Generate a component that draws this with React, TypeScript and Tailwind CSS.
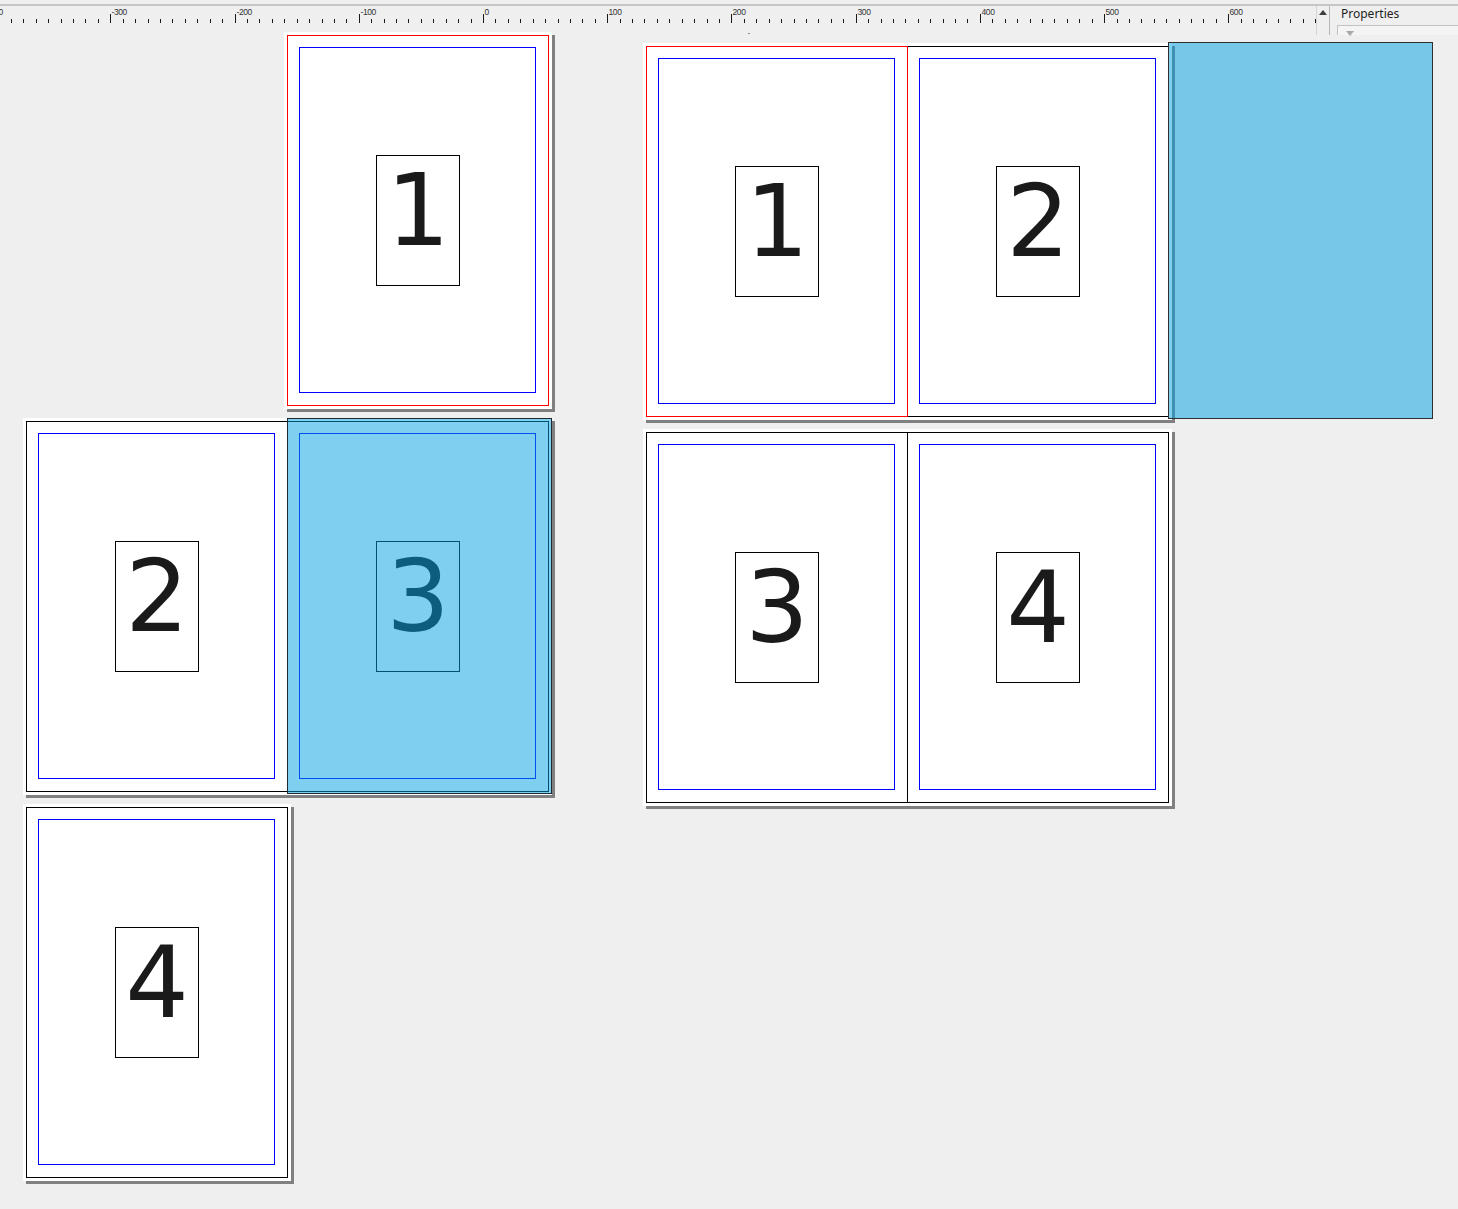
import React from 'react';

// ruler: 0 sits at x=483, 100 units = 124.2px
const ORIGIN = 483;
const SCALE = 1.2422;

function Ruler() {
  const ticks: number[] = [];
  for (let v = -400; v <= 670; v += 10) ticks.push(v);

  return (
    <svg width={1316} height={29} className="block shrink-0">
      {ticks.map((v) => {
        const x = Math.round(ORIGIN + v * SCALE);
        const major = v % 100 === 0;
        return (
          <g key={v}>
            <rect x={x} y={major ? 8 : 13} width={1} height={major ? 9 : 4} fill="#1a1a1a" />
            {major && (
              <text
                x={x + 1.5}
                y={9}
                fontSize={8.5}
                fill="#333"
                letterSpacing={-0.4}
                style={{ fontFamily: '"Liberation Sans", Arial, sans-serif' }}
              >
                {v}
              </text>
            )}
          </g>
        );
      })}
    </svg>
  );
}

function Page({ n, current, className = '' }: { n: number; current?: boolean; className?: string }) {
  return (
    <div
      className={`relative h-[371px] w-[262px] shrink-0 border bg-white ${
        current ? 'z-10 border-[#ff0000]' : 'border-black'
      } ${className}`}
    >
      <div className="absolute left-[11px] top-[11px] h-[346px] w-[237px] border border-[#0000ff]" />
      <div className="absolute left-[88px] top-[119px] h-[131px] w-[84px] border border-black pt-[5px] text-center font-['DejaVu_Sans',sans-serif] text-[100px] leading-[100px] text-[#1a1a1a]">
        {n}
      </div>
    </div>
  );
}

function Sheet({ className, children }: { className: string; children: React.ReactNode }) {
  return (
    <div className={`absolute flex bg-white p-[3px] shadow-[3px_3px_0_#808080] ${className}`}>{children}</div>
  );
}

export default function App() {
  return (
    <div className="relative h-[1209px] w-[1458px] overflow-hidden bg-[#efefef]">
      {/* top strip: ruler, scroll button, properties panel */}
      <div className="flex h-[35px] flex-col">
        <div className="h-[4px] shrink-0" />
        <div className="h-[2px] shrink-0 bg-[#c6c6c6]" />
        <div className="flex h-[29px]">
          <Ruler />
          <div className="flex w-[14px] shrink-0 justify-center border-x border-l-[#d4d4d4] border-r-[#b8b8b8] pt-[4px]">
            <svg width={8} height={5} viewBox="0 0 8 5" className="block">
              <path d="M0 5 L4 0 L8 5 Z" fill="#3c3c3c" />
            </svg>
          </div>
          <div className="flex-1 pl-[7px]">
            <div className="pl-[4px] font-['Noto_Sans',sans-serif] text-[12px] leading-[16px] text-[#1e1e1e]">
              Properties
            </div>
            <div className="mt-[3px] h-[10px] border-l border-t border-[#c2c2c2] bg-[#f4f4f4] pl-[8px] pt-[5px]">
              <svg width={8} height={5} viewBox="0 0 8 5" className="block">
                <path d="M0 0 L8 0 L4 5 Z" fill="#a8a8a8" />
              </svg>
            </div>
          </div>
        </div>
      </div>

      {/* canvas */}
      <div className="absolute inset-x-0 bottom-0 top-[32px]">
        {/* single-page layout */}
        <Sheet className="left-[284px] top-0">
          <Page n={1} current />
        </Sheet>
        <Sheet className="left-[23px] top-[386px]">
          <Page n={2} />
          <Page n={3} className="-ml-px" />
        </Sheet>
        <Sheet className="left-[23px] top-[772px]">
          <Page n={4} />
        </Sheet>
        <div className="absolute left-[287px] top-[386px] h-[376px] w-[265px] border border-[#1f2a30] bg-[rgba(0,160,225,0.5)]" />

        {/* spread layout */}
        <Sheet className="left-[643px] top-[11px]">
          <Page n={1} current />
          <Page n={2} className="-ml-px" />
        </Sheet>
        <Sheet className="left-[643px] top-[397px]">
          <Page n={3} />
          <Page n={4} className="-ml-px" />
        </Sheet>
        <div className="absolute left-[1168px] top-[10px] h-[377px] w-[265px] border border-[#2e2e2e] bg-[rgba(0,160,225,0.5)]" />

        <div className="absolute left-[748px] top-[1px] h-px w-[2px] bg-[#8a8a8a]" />
      </div>
    </div>
  );
}
